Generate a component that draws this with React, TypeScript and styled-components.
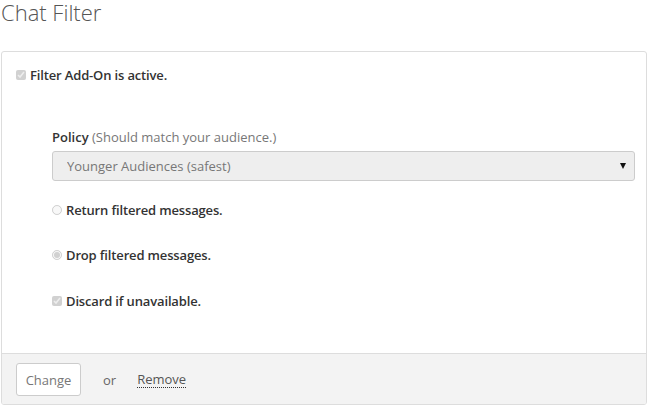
import React from "react";
import styled, { createGlobalStyle } from "styled-components";

const GlobalStyle = createGlobalStyle`
  body {
    margin: 0;
    font-family: "Open Sans", "Liberation Sans", sans-serif;
    font-size: 13px;
    color: #333;
    background: #fff;
  }
`;

const Page = styled.div`
  width: 649px;
`;

const Title = styled.h1`
  margin: 0;
  font-size: 22px;
  font-weight: 300;
  line-height: 24px;
  color: #555;
  padding-left: 1px;
`;

const Card = styled.div`
  margin: 27px 2px 0 1px;
  border: 1px solid #ddd;
  border-radius: 3px;
  background: #fff;
  overflow: hidden;
`;

const CardBody = styled.div`
  padding: 13px 11px 42px 14px;
`;

const CheckRow = styled.label`
  display: flex;
  align-items: center;
  height: 20px;
  font-weight: 600;
  letter-spacing: -0.15px;
  color: #333;
`;

const Box = styled.input`
  width: 10px;
  height: 10px;
  margin: 0 4px 0 0;
`;

const Options = styled.div`
  margin: 42px 0 0 36px;
  display: flex;
  flex-direction: column;
`;

const FieldLabel = styled.div`
  line-height: 20px;
  font-weight: 600;
  color: #333;
`;

const Hint = styled.span`
  font-weight: 400;
  color: #777;
`;

const SelectWrap = styled.div`
  position: relative;
  margin-top: 4px;
  margin-bottom: 19px;
`;

const Select = styled.select`
  appearance: none;
  width: 100%;
  height: 30px;
  border: 1px solid #ccc;
  border-radius: 3px;
  background: #eee;
  color: #777;
  font-family: inherit;
  font-size: 13px;
  padding: 0 14px;
  opacity: 1;
`;

const Arrow = styled.span`
  position: absolute;
  right: 9px;
  top: 12px;
  width: 0;
  height: 0;
  border-left: 3.5px solid transparent;
  border-right: 3.5px solid transparent;
  border-top: 6px solid #111;
  pointer-events: none;
`;

const OptionRow = styled(CheckRow)<{ $gap?: number }>`
  margin-top: ${(p) => p.$gap ?? 0}px;
`;

const Footer = styled.div`
  display: flex;
  align-items: center;
  border-top: 1px solid #ddd;
  background: #f3f3f3;
  padding: 9px 14px 8px;
`;

const Button = styled.button`
  height: 33px;
  width: 65px;
  border: 1px solid #ccc;
  border-radius: 3px;
  background: #fff;
  color: #777;
  font-family: inherit;
  font-size: 13px;
  padding: 0;
`;

const Or = styled.span`
  margin-left: 22px;
  color: #666;
`;

const LinkText = styled.a`
  margin-left: 21px;
  color: #555;
  text-decoration: none;
  border-bottom: 1px dotted #333;
  line-height: 15px;
`;

export default function App() {
  return (
    <Page>
      <GlobalStyle />
      <Title>Chat Filter</Title>
      <Card>
        <CardBody>
          <CheckRow>
            <Box type="checkbox" checked disabled readOnly />
            Filter Add-On is active.
          </CheckRow>
          <Options>
            <FieldLabel>
              Policy <Hint>(Should match your audience.)</Hint>
            </FieldLabel>
            <SelectWrap>
              <Select disabled value="young">
                <option value="young">Younger Audiences (safest)</option>
              </Select>
              <Arrow />
            </SelectWrap>
            <OptionRow>
              <Box type="radio" name="mode" disabled readOnly />
              Return filtered messages.
            </OptionRow>
            <OptionRow $gap={25}>
              <Box type="radio" name="mode" checked disabled readOnly />
              Drop filtered messages.
            </OptionRow>
            <OptionRow $gap={26}>
              <Box type="checkbox" checked disabled readOnly />
              Discard if unavailable.
            </OptionRow>
          </Options>
        </CardBody>
        <Footer>
          <Button>Change</Button>
          <Or>or</Or>
          <LinkText>Remove</LinkText>
        </Footer>
      </Card>
    </Page>
  );
}
